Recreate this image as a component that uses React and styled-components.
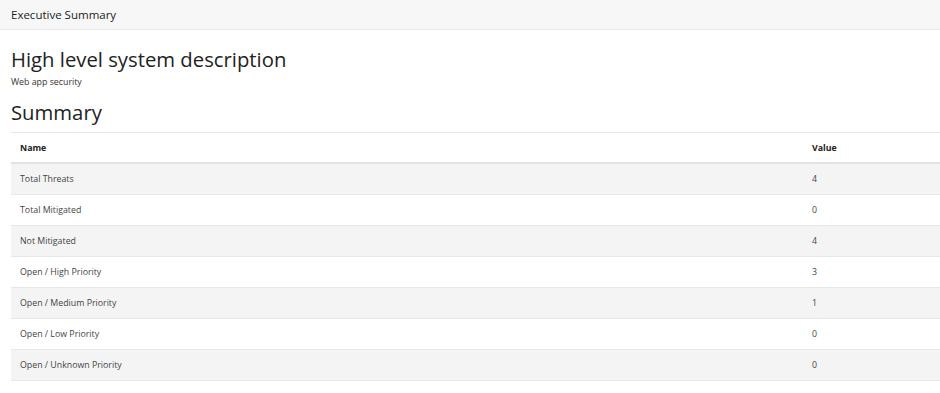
import React from "react"
import styled, { createGlobalStyle } from "styled-components"

const rows = [
  { name: "Total Threats", value: 4 },
  { name: "Total Mitigated", value: 0 },
  { name: "Not Mitigated", value: 4 },
  { name: "Open / High Priority", value: 3 },
  { name: "Open / Medium Priority", value: 1 },
  { name: "Open / Low Priority", value: 0 },
  { name: "Open / Unknown Priority", value: 0 },
]

function App() {
  return (
    <>
      <GlobalStyle />
      <Header>Executive Summary</Header>
      <Content>
        <Title>High level system description</Title>
        <Description>Web app security</Description>
        <Title>Summary</Title>
        <Table>
          <thead>
            <tr>
              <HeadCell>Name</HeadCell>
              <HeadCell $value>Value</HeadCell>
            </tr>
          </thead>
          <tbody>
            {rows.map((row, i) => (
              <Row key={row.name} $striped={i % 2 === 0}>
                <Cell>{row.name}</Cell>
                <Cell>{row.value}</Cell>
              </Row>
            ))}
          </tbody>
        </Table>
      </Content>
    </>
  )
}

export default App

const GlobalStyle = createGlobalStyle`
  body {
    margin: 0;
    background: #fff;
    font-family: "Open Sans", "Noto Sans", sans-serif;
    color: #333;
  }
`

const Header = styled.div`
  height: 29px;
  padding: 0 11px;
  display: flex;
  align-items: center;
  background: #f7f7f7;
  border-bottom: 1px solid #eaeaea;
  font-size: 11.5px;
  color: #222;
`

const Content = styled.div`
  padding: 14px 0 0 11px;
`

const Title = styled.h2`
  margin: 0;
  font-size: 20.3px;
  font-weight: 400;
  line-height: 30px;
  color: #222;
`

const Description = styled.p`
  margin: 1px 0 7px;
  font-size: 8.8px;
  line-height: 15px;
  color: #333;
`

const Table = styled.table`
  width: 100%;
  margin-top: 5px;
  border-collapse: collapse;
  border-top: 1px solid #e6e6e6;
  font-size: 8.8px;
`

const HeadCell = styled.th`
  height: 29px;
  padding: 0 9px;
  text-align: left;
  font-weight: 700;
  color: #222;
  border-bottom: 2px solid #e2e2e2;
  width: ${(p) => (p.$value ? "119px" : "auto")};
`

const Row = styled.tr`
  background: ${(p) => (p.$striped ? "#f4f4f4" : "#fff")};
  border-bottom: 1px solid #e8e8e8;
`

const Cell = styled.td`
  height: 30px;
  padding: 0 9px;
  color: #444;
`
